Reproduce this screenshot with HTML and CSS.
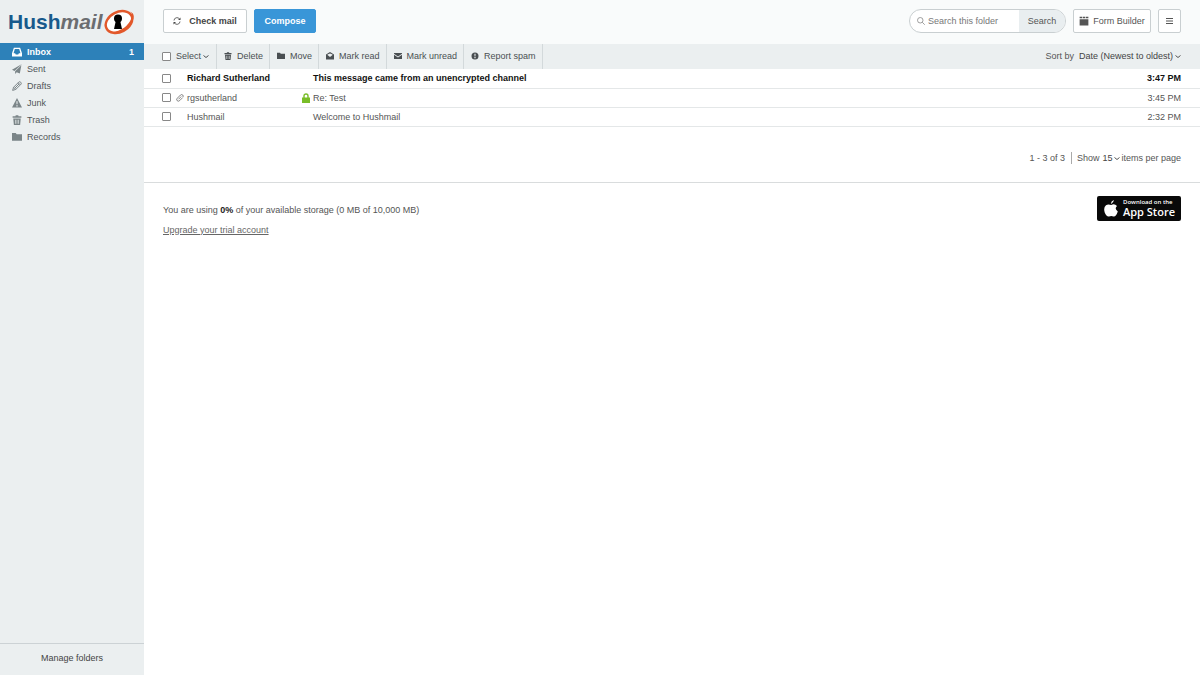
FILE: index.html
```html
<!DOCTYPE html>
<html lang="en">
<head>
    <meta charset="UTF-8">
    <meta name="viewport" content="width=device-width, initial-scale=1.0">
    <title>Hushmail - Inbox</title>
    <link rel="stylesheet" href="styles.css">
</head>
<body>
    <!-- Shared icons -->
    <svg class="sprite" aria-hidden="true">
        <symbol id="i-trash" viewBox="0 0 16 16">
            <path fill="currentColor" fill-rule="evenodd" d="M1 2h4.5L6 .5h4l.5 1.500H15v2.500H1zM2 5.500h12L13 16H3zM5 7.500V14h1V7.500zm2.500 0V14h1V7.500zm2.500 0V14h1V7.500z"/>
        </symbol>
        <symbol id="i-folder" viewBox="0 0 16 16">
            <path fill="currentColor" d="M0 1.500h6l1.500 2H16V14H0z"/>
        </symbol>
        <symbol id="i-down" viewBox="0 0 8 8">
            <path d="M1.500 3.500 4 5.500 6.500 3.500" fill="none" stroke="currentColor"/>
        </symbol>
    </svg>

    <div class="app">
        <aside class="sidebar">
            <a href="#" class="logo">
                <span class="logo-hush">Hush</span><span class="logo-mail">mail</span>
                <svg class="logo-mark" viewBox="0 0 32 26" aria-hidden="true">
                    <ellipse cx="16" cy="13" rx="14" ry="10" fill="#fff" stroke="#e2582b" stroke-width="2.400" transform="rotate(-27 16 13)"/>
                    <path d="M8 23.500Q24 21 28.500 9 30 4.500 27 2.500 33 5 29.500 12 23 24.500 8 23.500z" fill="#e2582b"/>
                    <circle cx="15" cy="9.500" r="4" fill="#000"/>
                    <path d="M13 11h4l2 9h-8z" fill="#000"/>
                </svg>
            </a>
            <nav class="folders">
                <a href="#" class="folder active">
                    <svg class="icon" viewBox="0 0 16 16"><path d="M3 1h10l3 9v5H0v-5zM4.500 3 2.500 10H5l1 2h4l1-2h2.500l-2-7z" fill="currentColor" fill-rule="evenodd"/></svg>
                    Inbox <span class="count">1</span>
                </a>
                <a href="#" class="folder">
                    <svg class="icon" viewBox="0 0 16 16"><path d="M16 0 0 9l4 2zM15 2 5 11.500V16l2.500-3 5 2z" fill="currentColor"/></svg>
                    Sent
                </a>
                <a href="#" class="folder">
                    <svg class="icon" viewBox="0 0 16 16"><path d="m1 15 1.500-5L11 1.500q1.500-1 3 .5t.5 3L6 13.500zM2.500 10 6 13.500M10 3l3 3M4.500 11.500l7-7" fill="none" stroke="currentColor" stroke-width="1.600"/></svg>
                    Drafts
                </a>
                <a href="#" class="folder">
                    <svg class="icon" viewBox="0 0 16 16"><path d="M8 0 16 15H0zM7 5l.3 5h1.400L9 5zm0 6.500v2h2v-2z" fill="currentColor" fill-rule="evenodd"/></svg>
                    Junk
                </a>
                <a href="#" class="folder">
                    <svg class="icon"><use href="#i-trash"/></svg>
                    Trash
                </a>
                <a href="#" class="folder">
                    <svg class="icon"><use href="#i-folder"/></svg>
                    Records
                </a>
            </nav>
            <a href="#" class="manage">Manage folders</a>
        </aside>

        <main class="main">
            <header class="topbar">
                <button type="button" class="btn btn-check">
                    <svg class="icon icon-sm" viewBox="0 0 16 16"><path d="M2 7a6 6 0 0 1 11-3M14 9a6 6 0 0 1-11 3" fill="none" stroke="currentColor" stroke-width="1.600"/><path d="M15 1v5h-5zM1 15v-5h5z" fill="currentColor"/></svg>
                    Check mail
                </button>
                <button type="button" class="btn btn-primary">Compose</button>
                <form class="search">
                    <svg class="icon icon-sm" viewBox="0 0 16 16"><path d="M12 6.500a5.500 5.500 0 1 1-11 0 5.500 5.500 0 0 1 11 0zM10.500 10.500l5 5" fill="none" stroke="currentColor" stroke-width="1.600"/></svg>
                    <input type="text" class="search-input" placeholder="Search this folder" aria-label="Search this folder">
                    <button type="button" class="search-btn">Search</button>
                </form>
                <button type="button" class="btn btn-form">
                    <svg class="icon" viewBox="0 0 16 16"><path d="M1 1h4v2.500H1zM6 1h4v2.500H6zM11 1h4v2.500h-4zM1 5h14v10H1z" fill="currentColor"/></svg>
                    Form Builder
                </button>
                <button type="button" class="btn btn-menu" aria-label="Menu">
                    <svg class="icon icon-sm" viewBox="0 0 8 8"><path d="M0 1.500h7M0 4h7M0 6.500h7" stroke="currentColor"/></svg>
                </button>
            </header>

            <div class="toolbar">
                <div class="tool">
                    <input type="checkbox" class="check" aria-label="Select all">
                    <button type="button" class="tool-btn">Select<svg class="caret"><use href="#i-down"/></svg></button>
                </div>
                <button type="button" class="tool"><svg class="icon icon-sm"><use href="#i-trash"/></svg>Delete</button>
                <button type="button" class="tool"><svg class="icon icon-sm"><use href="#i-folder"/></svg>Move</button>
                <button type="button" class="tool"><svg class="icon icon-sm" viewBox="0 0 16 16"><path d="M0 5 8 0l8 5v10H0zM3 6l5 4 5-4v-.8L8 3 3 5.200z" fill="currentColor" fill-rule="evenodd"/></svg>Mark read</button>
                <button type="button" class="tool"><svg class="icon icon-sm" viewBox="0 0 16 16"><path d="M0 2h16v1.500L8 9 0 3.500zM0 5.500l8 5.500 8-5.500V14H0z" fill="currentColor"/></svg>Mark unread</button>
                <button type="button" class="tool"><svg class="icon icon-sm" viewBox="0 0 16 16"><path d="M15 8A7 7 0 1 1 1 8a7 7 0 0 1 14 0zM6.800 3.500l.4 5.500h1.600l.4-5.500zm0 6.500v2.400h2.400V10z" fill="currentColor" fill-rule="evenodd"/></svg>Report spam</button>
                <div class="sort">
                    <label for="sort">Sort by</label>
                    <select id="sort" class="select">
                        <option>Date (Newest to oldest)</option>
                    </select>
                    <svg class="caret"><use href="#i-down"/></svg>
                </div>
            </div>

            <table class="messages">
                <tbody>
                    <tr class="unread">
                        <td class="col-check"><input type="checkbox" class="check" aria-label="Select message from Richard Sutherland"></td>
                        <td class="col-clip"></td>
                        <td class="col-from">Richard Sutherland</td>
                        <td class="col-lock"></td>
                        <td>This message came from an unencrypted channel</td>
                        <td class="col-time">3:47 PM</td>
                    </tr>
                    <tr>
                        <td class="col-check"><input type="checkbox" class="check" aria-label="Select message from rgsutherland"></td>
                        <td class="col-clip"><svg class="icon icon-sm" viewBox="0 0 16 16"><path d="M5 10.500 10.500 5M13 7.500 7.500 13q-2.500 2.500-5 .5t0-5L9 2q2.500-2 4.500 0t0 4.500" fill="none" stroke="currentColor" stroke-width="1.400"/></svg></td>
                        <td class="col-from">rgsutherland</td>
                        <td class="col-lock"><svg class="lock" viewBox="0 0 8 10"><path d="M2 5V3a2 2 0 0 1 4 0v2" fill="none" stroke="currentColor" stroke-width="1.400"/><path d="M0 4.500h8V10H0z" fill="currentColor"/></svg></td>
                        <td>Re: Test</td>
                        <td class="col-time">3:45 PM</td>
                    </tr>
                    <tr>
                        <td class="col-check"><input type="checkbox" class="check" aria-label="Select message from Hushmail"></td>
                        <td class="col-clip"></td>
                        <td class="col-from">Hushmail</td>
                        <td class="col-lock"></td>
                        <td>Welcome to Hushmail</td>
                        <td class="col-time">2:32 PM</td>
                    </tr>
                </tbody>
            </table>

            <div class="pager">
                <span class="range">1 - 3 of 3</span>
                <label for="perPage">Show</label>
                <select id="perPage" class="select">
                    <option>15</option>
                </select>
                <svg class="caret"><use href="#i-down"/></svg>
                <span>items per page</span>
            </div>

            <footer class="footer">
                <div class="storage">
                    <p>You are using <strong>0%</strong> of your available storage (0 MB of 10,000 MB)</p>
                    <a href="#">Upgrade your trial account</a>
                </div>
                <a href="#" class="app-store">
                    <svg class="apple" viewBox="0 0 14 17" aria-hidden="true">
                        <path d="M9.800 0Q10 2.400 7 4 6.600 1.600 9.800 0zM7.200 5Q10.500 3.300 13 6q-3 2.500.8 5.500Q12 17 9.500 16.500 7.300 15.600 5 16.500 2.500 17 .7 12.500-.8 7.500 2 5.200 4 4 7.200 5z" fill="#fff"/>
                    </svg>
                    <span class="app-store-text"><small>Download on the</small>App Store</span>
                </a>
            </footer>
        </main>
    </div>
</body>
</html>
```
FILE: styles.css
```css
* {
    box-sizing: border-box;
}
body {
    margin: 0;
    font-family: "Liberation Sans", Arial, sans-serif;
    font-size: 9px;
    line-height: 12px;
    color: #555;
    background: white;
}
button, input, select {
    font: inherit;
    color: inherit;
    margin: 0;
}
button {
    cursor: pointer;
}
.sprite {
    display: none;
}
.icon {
    width: 10px;
    height: 10px;
    flex: none;
}
.icon-sm {
    width: 8px;
    height: 8px;
}
.caret {
    width: 8px;
    height: 8px;
    flex: none;
}
.app {
    display: flex;
    min-height: 100vh;
}

/* Sidebar */
.sidebar {
    display: flex;
    flex-direction: column;
    width: 144px;
    flex: none;
    background: #ebeff0;
}
.logo {
    display: flex;
    align-items: center;
    height: 43px;
    padding-left: 8px;
    font-size: 21px;
    line-height: 24px;
    font-weight: bold;
    text-decoration: none;
}
.logo-hush {
    color: #17598c;
}
.logo-mail {
    color: #6b6d70;
    font-style: italic;
}
.logo-mark {
    width: 32px;
    height: 26px;
    flex: none;
}
.folder {
    display: flex;
    align-items: center;
    gap: 5px;
    height: 17px;
    padding: 0 10px 0 12px;
    color: #505558;
    text-decoration: none;
}
.folder .icon {
    color: #7b8588;
}
.folder.active {
    background: #2d81b9;
    color: white;
    font-weight: bold;
}
.folder.active .icon {
    color: white;
}
.count {
    margin-left: auto;
}
.manage {
    margin-top: auto;
    padding: 8px 0 11px;
    border-top: 1px solid #ccd2d5;
    color: #444;
    text-align: center;
    text-decoration: none;
}

/* Top bar */
.main {
    flex: 1;
    min-width: 0;
}
.topbar {
    display: flex;
    align-items: center;
    gap: 7px;
    height: 44px;
    padding: 0 19px 2px;
    background: #f9fbfb;
}
.btn {
    display: flex;
    align-items: center;
    justify-content: center;
    height: 24px;
    padding: 0 6px;
    border: 1px solid #c9cfd1;
    border-radius: 2px;
    background: white;
    white-space: nowrap;
}
.btn-check {
    gap: 8px;
    width: 84px;
    font-weight: bold;
    color: #444;
}
.btn-primary {
    width: 62px;
    border-color: #3996d8;
    background: #3996d8;
    color: white;
    font-weight: bold;
}
.btn-form {
    gap: 4px;
    width: 78px;
}
.btn-menu {
    width: 23px;
}
.search {
    display: flex;
    align-items: center;
    width: 157px;
    height: 24px;
    margin-left: auto;
    padding-left: 7px;
    border: 1px solid #c9cfd1;
    border-radius: 12px;
    background: white;
    overflow: hidden;
}
.search .icon {
    color: #888;
}
.search-input {
    flex: 1;
    min-width: 0;
    padding: 0 3px;
    border: 0;
    background: none;
    outline: none;
}
.search-input::placeholder {
    color: #777;
}
.search-btn {
    align-self: stretch;
    width: 46px;
    padding: 0;
    border: 0;
    background: #e9eef0;
}

/* Toolbar */
.toolbar {
    display: flex;
    height: 25px;
    padding: 0 18px 0 11px;
    background: #ebeff0;
}
.tool {
    display: flex;
    align-items: center;
    gap: 5px;
    padding: 0 6px 1px 7px;
    border: 0;
    border-right: 1px solid #d3d9db;
    background: none;
    color: #4a4f52;
    white-space: nowrap;
}
.tool-btn {
    display: flex;
    align-items: center;
    gap: 1px;
    padding: 0;
    border: 0;
    background: none;
}
.sort {
    display: flex;
    align-items: center;
    margin-left: auto;
    padding-bottom: 1px;
}
.sort label {
    margin-right: 5px;
}
.select {
    appearance: none;
    padding: 0;
    border: 0;
    background: none;
    color: #444;
}
.check {
    appearance: none;
    display: block;
    width: 9px;
    height: 9px;
    border: 1px solid #888;
    border-radius: 1px;
    background: white;
}
.check:checked {
    background: #2d81b9;
}

/* Message list */
.messages {
    width: 100%;
    table-layout: fixed;
    border-collapse: collapse;
}
.messages td {
    height: 19px;
    padding: 0;
    border-bottom: 1px solid #e4e7e8;
    white-space: nowrap;
}
.messages .col-check {
    width: 32px;
    padding-left: 18px;
}
.col-clip {
    width: 11px;
}
.col-clip .icon, .lock {
    display: block;
}
.col-from {
    width: 115px;
}
.col-lock {
    width: 11px;
    color: #79bd28;
}
.lock {
    width: 8px;
    height: 10px;
}
.messages .col-time {
    width: 80px;
    padding-right: 19px;
    text-align: right;
}
.unread {
    color: #111;
    font-weight: bold;
}
.pager {
    display: flex;
    align-items: center;
    justify-content: flex-end;
    height: 56px;
    padding: 7px 19px 0 0;
    border-bottom: 1px solid #d9dcdd;
}
.range {
    margin-right: 5px;
    padding-right: 6px;
    border-right: 1px solid #aaa;
}
.pager label {
    margin-right: 3px;
}

/* Footer */
.footer {
    display: flex;
    justify-content: space-between;
    align-items: flex-start;
    padding: 13px 19px 0;
}
.storage p {
    margin: 8px 0;
}
.storage strong {
    color: #222;
}
.storage a {
    color: #666;
}
.app-store {
    display: flex;
    align-items: center;
    gap: 5px;
    width: 84px;
    height: 25px;
    padding-left: 7px;
    border-radius: 2px;
    background: #090909;
    color: white;
    text-decoration: none;
}
.apple {
    width: 14px;
    height: 17px;
    flex: none;
}
.app-store-text {
    font-family: "Open Sans", sans-serif;
    font-size: 11px;
    line-height: 11px;
    font-weight: 600;
    white-space: nowrap;
}
.app-store-text small {
    display: block;
    font-size: 6px;
    line-height: 7px;
}
```
